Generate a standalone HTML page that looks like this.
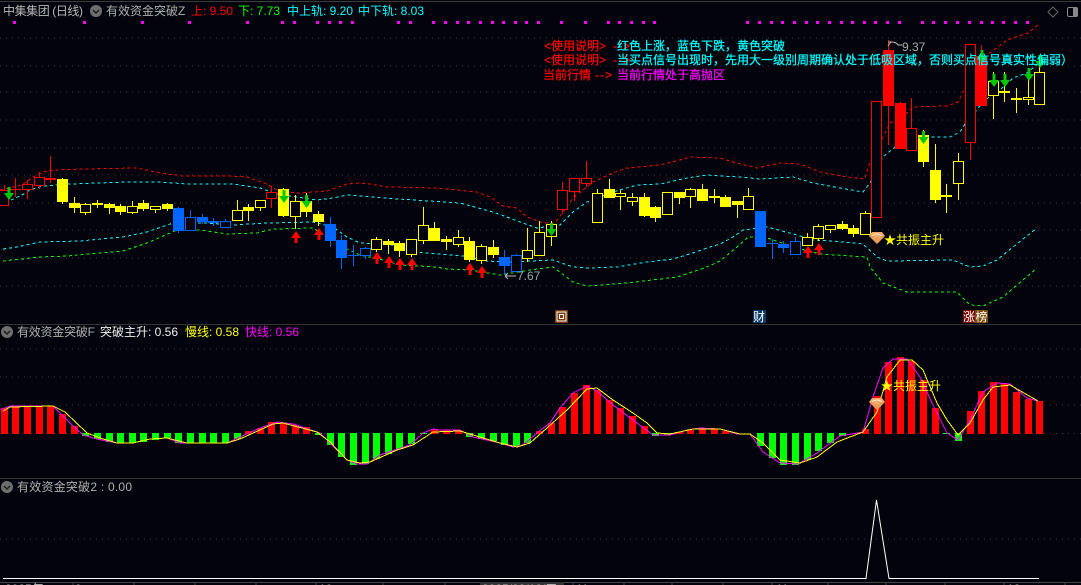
<!DOCTYPE html>
<html><head><meta charset="utf-8"><style>
html,body{margin:0;padding:0;background:#03030d;width:1081px;height:585px;overflow:hidden}
svg{display:block}
text{font-family:"Liberation Sans","Noto Sans CJK SC",sans-serif;font-size:12px}
.n{stroke-width:.25}
</style></head><body>
<svg width="1081" height="585" viewBox="0 0 1081 585" xmlns="http://www.w3.org/2000/svg">
<defs>
<path id="dn" d="M-1.5 0h3v6h3.5l-5 7-5-7h3.5z" fill="#00c800"/>
<path id="up" d="M0 0l5 7h-3.5v5h-3v-5h-3.5z" fill="#f00"/>
<g id="gem"><path d="M-5 0H5L8 4 0 12-8 4z" fill="#f4a868"/><path d="M-5 4Q0 0 5 4M-3 6Q0 3 3 6" fill="none" stroke="#fff3e0" stroke-width="1"/><path d="M-8 4L0 12 8 4z" fill="#e8924a" opacity=".6"/></g>
<g id="ic"><circle r="6" fill="#6e6e6e"/><path d="M-3-1L0 2 3-1" fill="none" stroke="#1a1a1a" stroke-width="1.4"/></g>
</defs>
<rect width="1081" height="585" fill="#03030d"/>
<path d="M0 1.5H1081" stroke="#3c3c3c"/>
<!-- grid -->
<g stroke="#3a3a3a" stroke-dasharray="1 5" fill="none">
<path d="M0 38H1081M0 66H1081M0 92H1081M0 120H1081M0 148H1081M0 175H1081M0 203H1081M0 230H1081M0 258H1081M0 286H1081"/>
<path d="M0 349H1081M0 377H1081M0 405H1081M0 433.5H1081M0 539H1081"/>
</g>
<path d="M0 324.5H1081M0 478.5H1081" stroke="#333"/>
<!-- magenta dots -->
<path stroke="#f0f" stroke-width="3" fill="none" d="M13 22.5h3M83 22.5h3M141 22.5h3M188 22.5h3M246 22.5h3M281 22.5h3M293 22.5h3M316 22.5h3M328 22.5h3M339 22.5h3M351 22.5h3M397 22.5h3M409 22.5h3M432 22.5h3M444 22.5h3M456 22.5h3M467 22.5h3M479 22.5h3M491 22.5h3M502 22.5h3M514 22.5h3M525 22.5h3M537 22.5h3M560 22.5h3M584 22.5h3M607 22.5h3M618 22.5h3M630 22.5h3M642 22.5h3M653 22.5h3M746 22.5h3M758 22.5h3M770 22.5h3M781 22.5h3M793 22.5h3M805 22.5h3M816 22.5h3M828 22.5h3M840 22.5h3M851 22.5h3M863 22.5h3M874 22.5h3M886 22.5h3M898 22.5h3M921 22.5h3M932 22.5h3M944 22.5h3M956 22.5h3M968 22.5h3M980 22.5h3M991 22.5h3M1002 22.5h3M1014 22.5h3M1026 22.5h3"/>
<!-- bands -->
<g fill="none" stroke-dasharray="3 3" shape-rendering="crispEdges">
<path stroke="#f00" d="M0 190L22 185L33 177L43 172L53 170L83 169L137 168L160 173L183 176L230 176L247 177L267 184L280 192L300 193L327 191L347 184L360 183L370 184L388 187L437 188L477 192L490 197L497 202L503 206L517 208L527 217L543 223L555 223L563 212L573 198L593 182L613 173L627 168L660 165L680 160L690 157L720 158L733 162L757 168L780 163L800 164L820 172L847 177L865 179L868 167L883 137L890 123L907 113L913 107L947 106L958 102L965 88L977 67L990 53L1007 40L1028 33L1038 25"/>
<path stroke="#0ff" d="M0 205L22 195L30 190L43 186L70 184L127 182L160 182L187 184L233 184L260 188L277 194L317 200L333 198L347 195L360 196L383 198L460 203L493 212L523 223L537 228L560 225L573 212L587 202L613 192L637 185L660 184L687 178L707 175L720 176L740 177L760 179L793 177L813 183L840 188L863 192L870 183L883 157L890 151L907 138L933 137L950 137L960 132L965 124L985 100L1000 90L1013 78L1027 73L1040 62"/>
<path stroke="#0ff" d="M3 249L17 247L40 242L80 241L123 237L147 232L173 223L207 223L233 225L267 223L313 222L333 227L347 237L360 243L393 245L417 252L463 256L487 261L507 262L553 260L573 267L587 268L617 267L647 262L673 259L693 253L707 248L720 244L733 237L743 230L767 227L797 235L813 240L833 241L863 244L877 257L887 261L953 260L970 267L983 266L997 260L1013 247L1037 228"/>
<path stroke="#0f0" d="M3 261L40 257L67 256L123 251L147 243L177 230L200 230L227 234L257 233L273 229L313 228L347 249L360 255L383 260L400 265L437 267L447 269L470 270L500 275L530 270L553 267L573 282L587 286L627 283L677 277L707 267L720 261L737 247L748 237L767 238L797 248L820 254L867 257L870 267L883 283L907 292L957 292L970 305L983 306L1003 297L1037 268"/>
</g>
<!-- wicks -->
<path stroke="#f00" fill="none" d="M4.5 185V190M15.5 178V197M27.5 180V199M39.5 172V189M50.5 156V183M271.5 186V208M562.5 182V214M574.5 178V201M586.5 161V187M888.5 40V145M900.5 102V149M911.5 98V128M970.5 142V160M981.5 45V106M10 189.5H21"/>
<path stroke="#f00" fill="none" stroke-width="2" d="M45 179H56"/>
<path stroke="#ff0" fill="none" d="M62.5 178V204M74.5 197V213M85.5 203V215M97.5 200V208M109.5 203V214M120.5 204V215M132.5 201V214M143.5 200V211M155.5 206V213M167.5 203V211M237.5 200V220M248.5 204V221M260.5 200V211M283.5 188V217M295.5 195V229M306.5 193V217M318.5 211V226M376.5 237V252M388.5 239V254M399.5 241V257M411.5 239V257M423.5 207V244M434.5 222V241M446.5 236V250M458.5 230V247M469.5 237V262M481.5 244V264M493.5 240V258M527.5 228V262M539.5 221V232M551.5 221V246M597.5 189V193M609.5 179V198M620.5 190V210M632.5 193V206M644.5 193V217M655.5 206V222M679.5 198V204M690.5 188V208M702.5 184V201M714.5 189V203M725.5 195V197M737.5 205V218M748.5 188V210M807.5 233V245M818.5 224V241M830.5 229V233M842.5 221V230M853.5 225V237M865.5 211V213M923.5 130V167M935.5 144V203M946.5 184V213M958.5 153V200M993.5 72V119M1004.5 72V102M1016.5 88V113M1028.5 76V105M1039.5 63V105"/>
<path stroke="#ff0" fill="none" stroke-width="2" d="M92 204H103M709 197H720M941 196H952M999 92H1010M1011 99H1022"/>
<path stroke="#06f" fill="none" d="M178.5 207V233M190.5 210V230M202.5 214V224M213.5 218V226M225.5 219V228M330.5 217V247M341.5 235V269M353.5 245V266M365.5 247V259M504.5 250V275M516.5 254V255M772.5 239V259M783.5 241V253M795.5 237V241M348 255.5H359M767 243.5H778"/>
<!-- hollow bodies -->
<path fill="#03030d" stroke="#f00" d="M-1.5 190.5h10v15h-10zM22.5 184.5h10v5h-10zM34.5 177.5h10v8h-10zM266.5 192.5h10v6h-10zM557.5 190.5h10v19h-10zM569.5 178.5h10v13h-10zM581.5 178.5h10v5h-10zM871.5 101.5h10v116h-10zM906.5 128.5h10v22h-10zM965.5 44.5h10v98h-10z"/>
<path fill="#03030d" stroke="#ff0" d="M80.5 204.5h10v8h-10zM127.5 206.5h10v6h-10zM150.5 206.5h10v3h-10zM232.5 210.5h10v10h-10zM255.5 200.5h10v7h-10zM290.5 201.5h10v15h-10zM371.5 239.5h10v10h-10zM406.5 239.5h10v15h-10zM418.5 225.5h10v15h-10zM453.5 237.5h10v7h-10zM476.5 246.5h10v14h-10zM522.5 250.5h10v8h-10zM534.5 232.5h10v23h-10zM546.5 224.5h10v12h-10zM592.5 193.5h10v29h-10zM615.5 193.5h10v3h-10zM627.5 197.5h10v4h-10zM662.5 192.5h10v22h-10zM685.5 189.5h10v7h-10zM743.5 196.5h10v13h-10zM802.5 237.5h10v8h-10zM813.5 226.5h10v12h-10zM825.5 225.5h10v4h-10zM860.5 213.5h10v21h-10zM953.5 161.5h10v22h-10zM988.5 81.5h10v14h-10zM1023.5 97.5h10v2h-10zM1034.5 72.5h10v32h-10z"/>
<path fill="#03030d" stroke="#06f" d="M185.5 217.5h10v13h-10zM220.5 221.5h10v6h-10zM360.5 248.5h10v7h-10zM511.5 255.5h10v16h-10zM790.5 241.5h10v13h-10z"/>
<!-- filled bodies -->
<path fill="#f00" d="M883 50h11v56h-11zM895 103h11v46h-11zM976 56h11v50h-11z"/>
<path fill="#ff0" d="M57 179h11v23h-11zM69 203h11v5h-11zM104 204h11v4h-11zM115 206h11v6h-11zM138 203h11v6h-11zM162 204h11v5h-11zM243 207h11v4h-11zM278 189h11v27h-11zM301 201h11v11h-11zM313 214h11v8h-11zM383 241h11v4h-11zM394 243h11v8h-11zM429 228h11v13h-11zM441 239h11v3h-11zM464 241h11v19h-11zM488 247h11v8h-11zM604 189h11v9h-11zM639 197h11v19h-11zM650 207h11v11h-11zM674 192h11v6h-11zM697 189h11v12h-11zM720 197h11v10h-11zM732 201h11v4h-11zM837 224h11v5h-11zM848 228h11v6h-11zM918 135h11v27h-11zM930 170h11v30h-11z"/>
<path fill="#06f" d="M173 208h11v23h-11zM197 217h11v5h-11zM208 221h11v2h-11zM325 224h11v17h-11zM336 240h11v18h-11zM499 257h11v9h-11zM755 211h11v36h-11zM778 244h11v4h-11z"/>
<!-- arrows -->
<use href="#dn" x="9" y="187"/><use href="#dn" x="284" y="190"/><use href="#dn" x="306.5" y="195"/><use href="#dn" x="551.5" y="223"/><use href="#dn" x="923.5" y="131"/><use href="#dn" x="982" y="50"/><use href="#dn" x="994" y="74"/><use href="#dn" x="1005" y="74"/><use href="#dn" x="1029" y="68"/><use href="#dn" x="1040" y="55"/>
<use href="#up" x="296" y="231"/><use href="#up" x="319" y="228"/><use href="#up" x="377" y="252"/><use href="#up" x="389" y="256"/><use href="#up" x="400" y="258"/><use href="#up" x="412" y="258"/><use href="#up" x="470" y="263"/><use href="#up" x="482" y="266"/><use href="#up" x="808" y="246"/><use href="#up" x="819" y="243"/>
<!-- price labels -->
<path d="M888 46l3-4M888 42h4q4 0 6 3h4M505 276l3-3M505 276l3 3M505 276h11" fill="none" stroke="#bbb"/>
<text x="902" y="51" fill="#aaa">9.37</text>
<text x="517" y="280" fill="#9aa">7.67</text>
<!-- gem + label -->
<use href="#gem" x="877" y="232"/>
<text x="884" y="244" fill="#ff0">★共振主升</text>
<!-- event markers -->
<rect x="555" y="310" width="13" height="13" fill="#7a3a0a"/><rect x="557" y="312" width="9" height="9" fill="none" stroke="#fff"/><rect x="559.5" y="314.5" width="4" height="4" fill="none" stroke="#fff"/>
<rect x="753" y="310" width="13" height="13" fill="#0a3a6a"/><text x="753" y="321" fill="#fff">财</text>
<rect x="963" y="310" width="12" height="13" fill="#7a0a0a"/><rect x="975" y="310" width="13" height="13" fill="#7a4a0a"/><text x="963" y="321" fill="#fff">涨</text><text x="975.5" y="321" fill="#fff">榜</text>
<!-- header -->
<text x="3" y="15" fill="#b8b8b8" textLength="80" lengthAdjust="spacing">中集集团 (日线)</text>
<use href="#ic" x="96" y="11"/>
<text x="106" y="15" fill="#b0b0b0">有效资金突破Z</text>
<text x="191" y="15" fill="#f00">上: 9.50</text>
<text x="238" y="15" fill="#0f0">下: 7.73</text>
<text x="287" y="15" fill="#0ff">中上轨: 9.20</text>
<text x="358" y="15" fill="#0ff">中下轨: 8.03</text>
<path d="M1053 7l5 5-5 5-5-5z" fill="none" stroke="#666"/>
<rect x="1067.5" y="7.5" width="10" height="9" rx="1.5" fill="none" stroke="#888"/><rect x="1073" y="8" width="4" height="8" fill="#888"/>
<!-- notes -->
<text class="n" x="544" y="50" fill="#f00" stroke="#f00">&lt;使用说明&gt;</text>
<text class="n" x="613" y="50" fill="#f00" stroke="#f00" letter-spacing="1">--&gt;</text>
<text class="n" x="617" y="50" fill="#0ff" stroke="#0ff">红色上涨，蓝色下跌，黄色突破</text>
<text class="n" x="544" y="64" fill="#f00" stroke="#f00">&lt;使用说明&gt;</text>
<text class="n" x="613" y="64" fill="#f00" stroke="#f00" letter-spacing="1">--&gt;</text>
<text class="n" x="617" y="64" fill="#0ff" stroke="#0ff">当买点信号出现时，先用大一级别周期确认处于低吸区域，否则买点信号真实性偏弱）</text>
<text class="n" x="543" y="79" fill="#f00" stroke="#f00">当前行情</text>
<text class="n" x="595" y="79" fill="#f00" stroke="#f00" letter-spacing="1">--&gt;</text>
<text class="n" x="617" y="79" fill="#f0f" stroke="#f0f">当前行情处于高抛区</text>
<!-- pane 2 -->
<use href="#ic" x="7" y="332"/>
<text x="17" y="336" fill="#b0b0b0" textLength="78">有效资金突破F</text>
<text x="100" y="336" fill="#eee">突破主升: 0.56</text>
<text x="185" y="336" fill="#ff0">慢线: 0.58</text>
<text x="245" y="336" fill="#f0f">快线: 0.56</text>
<path fill="none" stroke="#f00" stroke-width="7" d="M4.5 434V408M15.5 434V406M27.5 434V406M39.5 434V406M50.5 434V406M62.5 434V414M74.5 434V426M248.5 434V431M260.5 434V428M271.5 434V422M283.5 434V423M295.5 434V425M306.5 434V427M434.5 434V429M446.5 434V430M458.5 434V430M539.5 434V431M551.5 434V423M562.5 434V407M574.5 434V393M586.5 434V385M597.5 434V390M609.5 434V400M620.5 434V408M632.5 434V416M644.5 434V426M679.5 434V432M690.5 434V430M702.5 434V429M714.5 434V429M725.5 434V431M865.5 434V429M877.5 434V396M888.5 434V362M900.5 434V357M911.5 434V361M923.5 434V380M935.5 434V408M970.5 434V411M981.5 434V391M993.5 434V382M1004.5 434V384M1016.5 434V392M1028.5 434V399M1039.5 434V401"/>
<path fill="none" stroke="#0f0" stroke-width="7" d="M85.5 433V436M97.5 433V439M109.5 433V442M120.5 433V443M132.5 433V443M143.5 433V442M155.5 433V440M167.5 433V438M178.5 433V443M190.5 433V443M202.5 433V443M213.5 433V443M225.5 433V443M237.5 433V439M318.5 433V435M330.5 433V445M341.5 433V457M353.5 433V465M365.5 433V464M376.5 433V459M388.5 433V454M399.5 433V449M411.5 433V444M423.5 433V434M469.5 433V437M481.5 433V439M493.5 433V441M504.5 433V445M516.5 433V446M527.5 433V443M655.5 433V436M667.5 433V435M760.5 433V446M772.5 433V458M783.5 433V465M795.5 433V465M807.5 433V460M818.5 433V451M830.5 433V443M842.5 433V436M946.5 433V434M958.5 433V441"/>
<path fill="none" stroke="#f0f" shape-rendering="crispEdges" d="M0 410L10 406L53 406L70 423L83 435L97 439L117 443L133 443L150 439L167 438L180 443L227 443L240 437L260 428L277 422L293 424L320 433L333 446L347 460L357 464L367 464L380 455L410 445L423 433L433 429L440 430L460 430L473 437L500 443L513 447L523 445L537 433L550 423L560 408L573 393L587 386L597 391L613 405L633 420L653 435L670 435L687 430L700 428L720 429L737 434L750 434L763 452L780 463L798 464L817 453L840 436L863 432L873 397L883 368L893 359L907 359L920 377L933 405L947 433L958 440L970 420L983 392L997 383L1010 384L1027 398L1038 401"/>
<path fill="none" stroke="#ff0" shape-rendering="crispEdges" d="M3 411L10 407L53 406L65 412L87 433L100 438L117 443L133 443L150 439L167 438L187 443L227 443L240 439L273 424L283 423L317 432L330 442L347 460L360 463L370 462L397 450L413 445L433 432L460 431L473 435L500 443L517 447L530 443L547 428L567 410L587 389L597 388L613 400L633 413L647 423L657 433L670 434L693 429L720 429L740 434L750 434L763 443L780 460L800 463L817 457L837 442L863 432L877 412L887 377L900 360L912 360L923 370L937 403L947 420L958 435L970 423L983 400L993 387L1010 385L1038 401"/>
<use href="#gem" x="877" y="398"/>
<text x="881" y="390" fill="#ff0">★共振主升</text>
<!-- pane 3 -->
<use href="#ic" x="7" y="487"/>
<text x="17" y="491" fill="#b0b0b0" textLength="115">有效资金突破2 : 0.00</text>
<path fill="none" stroke="#fff" d="M3 578.5H866L876.5 500L889 578.5H1039"/>
<!-- axis -->
<path stroke="#444" fill="none" d="M0 582.5H1081M73 582v3M134 582v3M195 582v3M256 582v3M316 582v3M383 582v3M445 582v3M573 582v3M624 582v3M672 582v3M723 582v3M772 582v3M828 582v3M886 582v3M945 582v3M1004 582v3M1065 582v3"/>
<rect x="480" y="582" width="84" height="3" fill="#333"/>
<g fill="#bbb"><text x="5" y="593">2025年</text><text x="75" y="593">9</text><text x="319" y="593">10</text><text x="482" y="593">2025/09/12/五</text><text x="576" y="593">11</text><text x="776" y="593">11</text><text x="1007" y="593">12</text></g>
</svg>
</body></html>
